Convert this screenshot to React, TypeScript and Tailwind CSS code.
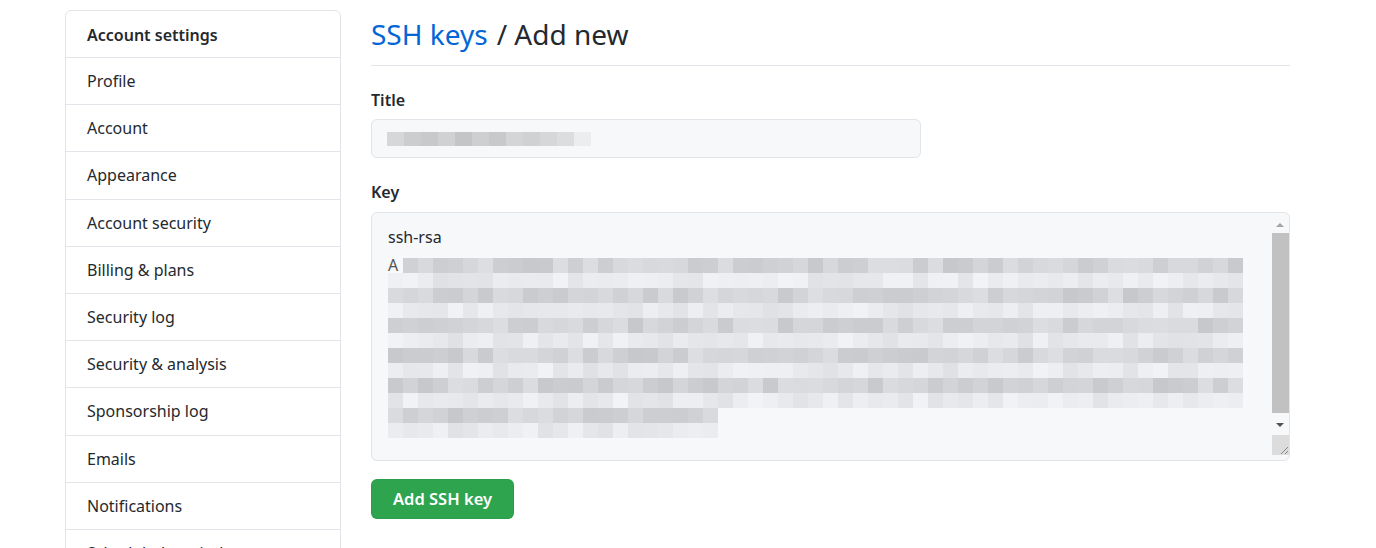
import React from "react";

const navItems = [
  "Profile",
  "Account",
  "Appearance",
  "Account security",
  "Billing & plans",
  "Security log",
  "Security & analysis",
  "Sponsorship log",
  "Emails",
  "Notifications",
  "Scheduled reminders",
];

// deterministic noise for the pixelated (redacted) key text
function rand(seed: number) {
  const x = Math.sin(seed * 12.9898 + 78.233) * 43758.5453;
  return x - Math.floor(x);
}

function shade(row: number, col: number) {
  const dark = row % 2 === 0;
  const base = dark ? 200 : 225;
  const spread = dark ? 22 : 18;
  const v = Math.round(base + rand(row * 97 + col * 13) * spread);
  return `rgb(${v - 2},${v},${v + 3})`;
}

function BlurredRows() {
  const rows = Array.from({ length: 12 }, (_, r) => r);
  return (
    <div className="flex flex-col">
      {rows.map((r) => {
        const cols = r >= 10 ? 22 : 57;
        return (
          <div key={r} className="flex h-[15px]">
            {Array.from({ length: cols }, (_, c) =>
              r === 0 && c === 0 ? (
                <div key={c} className="w-[15px] text-[16px] leading-[15px] text-[#555]">
                  A
                </div>
              ) : (
                <div key={c} className="h-full w-[15px]" style={{ background: shade(r, c) }} />
              )
            )}
          </div>
        );
      })}
    </div>
  );
}

export default function App() {
  return (
    <div className="flex h-[548px] w-[1376px] items-start gap-[30px] overflow-hidden bg-white pl-[65px] pt-[10px] text-[#24292e] [font-family:'Noto_Sans',sans-serif]">
      {/* Sidebar */}
      <nav className="w-[276px] shrink-0 rounded-t-[6px] border border-[#e1e4e8]">
        <div className="flex h-[46px] items-center px-[21px] pt-[1px] text-[16px] font-semibold">Account settings</div>
        {navItems.map((item) => (
          <div key={item} className="flex h-[47.2px] items-center border-t border-[#e1e4e8] px-[21px] text-[16px]">
            {item}
          </div>
        ))}
      </nav>

      {/* Main */}
      <main className="w-[919px] shrink-0">
        <div className="flex h-[56px] items-start border-b border-[#e1e4e8] pt-[5px] text-[28px] leading-[38px]">
          <a className="text-[#0366d6]">SSH keys</a>
          <span className="ml-[9px]">/ Add new</span>
        </div>

        <div className="mt-[22px] text-[16px] font-semibold">Title</div>
        <div className="mt-[7px] flex h-[39px] w-[550px] items-center rounded-[6px] border border-[#e1e4e8] bg-[#f6f8fa] px-[15px]">
          <div className="flex h-[14px] items-end">
            {[214, 204, 200, 208, 196, 206, 200, 212, 208, 214, 220, 236].map((v, i) => (
              <div key={i} className="h-full w-[17px]" style={{ background: `rgb(${v},${v + 1},${v + 3})` }} />
            ))}
          </div>
        </div>

        <div className="mt-[22px] text-[16px] font-semibold">Key</div>
        <div className="mt-[8px] flex h-[249px] rounded-[6px] border border-[#e1e4e8] bg-[#f6f8fa]">
          <div className="flex-1 pl-[16px] pt-[14px]">
            <div className="text-[16px] leading-[21px]">ssh-rsa</div>
            <div className="mt-[10px] flex">
              <BlurredRows />
            </div>
          </div>
          {/* scrollbar */}
          <div className="flex w-[18px] flex-col items-center pt-[4px]">
            <svg width="8" height="8" viewBox="0 0 8 8" className="mt-[4px]">
              <path d="M0 6 L4 2 L8 6 Z" fill="#a3a3a3" />
            </svg>
            <div className="mt-[4px] h-[180px] w-[17px] bg-[#c1c1c1]" />
            <svg width="8" height="8" viewBox="0 0 8 8" className="mt-[8px]">
              <path d="M0 2 L8 2 L4 6 Z" fill="#505050" />
            </svg>
            <div className="mt-[6px] flex h-[20px] w-[17px] items-end justify-end bg-[#dcdcdc]">
              <svg width="10" height="10" viewBox="0 0 10 10">
                <path d="M9 2 L2 9 M9 6 L6 9" stroke="#888" strokeWidth="1" />
              </svg>
            </div>
          </div>
        </div>

        <button className="mt-[18px] h-[40px] rounded-[6px] border border-[#22863a]/20 bg-[#2ea44f] px-[21px] text-[16.5px] font-semibold text-white">
          Add SSH key
        </button>
      </main>
    </div>
  );
}
